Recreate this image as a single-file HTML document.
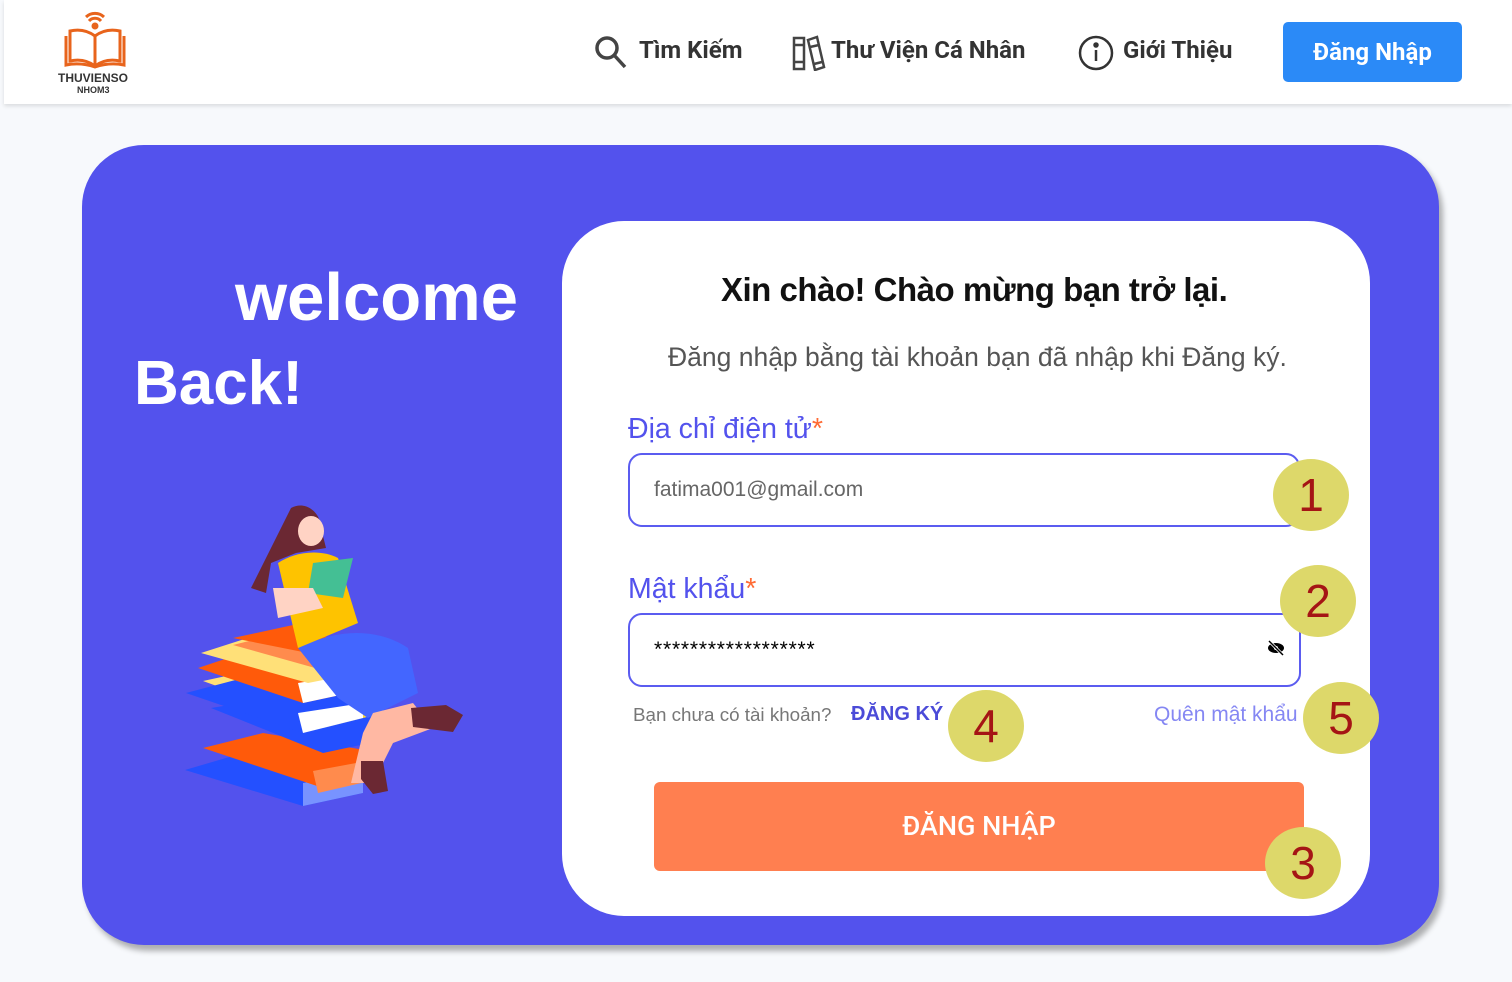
<!DOCTYPE html>
<html><head><meta charset="utf-8"><style>
*{margin:0;padding:0;box-sizing:border-box}
body{width:1512px;height:982px;overflow:hidden;background:#f7f9fc;font-family:"Roboto","Liberation Sans",sans-serif;position:relative}
.hdr{position:absolute;left:4px;top:0;width:1508px;height:104px;background:#fff;box-shadow:0 2px 4px rgba(0,0,0,.12)}
.nav{position:absolute;top:36px;font-size:24px;font-weight:700;color:#333;display:flex;align-items:center}
.btn{position:absolute;left:1283px;top:22px;width:179px;height:60px;background:#2b8af7;border-radius:5px;color:#fff;font-size:24px;font-weight:700;text-align:center;line-height:60px}
.card{position:absolute;left:82px;top:145px;width:1357px;height:800px;background:#5352ed;border-radius:62px;box-shadow:4px 6px 6px rgba(0,0,0,.3)}
.w{position:absolute;color:#fff;font-weight:900;font-size:62px;font-family:"Liberation Sans",sans-serif}
.form{position:absolute;left:562px;top:221px;width:808px;height:695px;background:#fff;border-radius:62px}
.t{position:absolute;font-family:"Liberation Sans",sans-serif;white-space:nowrap}
.inp{position:absolute;border:2px solid #5b5cf0;border-radius:14px;background:#fff}
.b{position:absolute;width:76px;height:72px;border-radius:50%;background:#ddd86a;color:#a51515;font-size:46px;text-align:center;line-height:72px;font-family:"Liberation Sans",sans-serif}
</style></head><body>
<div class="hdr"></div>
<svg style="position:absolute;left:60px;top:8px" width="70" height="62" viewBox="0 0 70 62" fill="none" stroke="#e8641c" stroke-width="3">
<path d="M26 9a13 13 0 0 1 18 0M29 13a8 8 0 0 1 12 0"/><circle cx="35" cy="18" r="2" fill="#e8641c"/>
<path d="M35 58V28c-8-6-16-7-25-5v30c9-2 17-1 25 5c8-6 16-7 25-5V23c-9-2-17-1-25 5"/>
<path d="M6 28v29c10-2 20-1 29 2c9-3 19-4 29-2V28"/>
</svg>
<div class="t" style="left:58px;top:71px;font-size:12px;font-weight:700;color:#333">THUVIENSO</div>
<div class="t" style="left:77px;top:85px;font-size:9px;font-weight:700;color:#333">NHOM3</div>

<svg style="position:absolute;left:594px;top:35px" width="34" height="34" viewBox="0 0 34 34" fill="none" stroke="#444" stroke-width="3.5"><circle cx="13" cy="13" r="10"/><path d="M20 20l11 12"/></svg>
<div class="nav" style="left:639px">Tìm Kiếm</div>
<svg style="position:absolute;left:792px;top:35px" width="34" height="36" viewBox="0 0 34 36" fill="none" stroke="#444" stroke-width="2.5"><rect x="2" y="3" width="10" height="31"/><path d="M2 10h10M2 27h10"/><path d="M16 5l9-3 7 30-9 3z"/><path d="M18 12l9-2M22 29l8-2"/></svg>
<div class="nav" style="left:831px">Thư Viện Cá Nhân</div>
<svg style="position:absolute;left:1078px;top:35px" width="36" height="36" viewBox="0 0 36 36" fill="none" stroke="#333" stroke-width="2.5"><circle cx="18" cy="18" r="16"/><path d="M18 15v11"/><circle cx="18" cy="10" r="1.5" fill="#333"/></svg>
<div class="nav" style="left:1123px">Giới Thiệu</div>
<div class="btn">Đăng Nhập</div>

<div class="card"></div>
<div class="w" style="left:235px;top:259px;font-size:67px">welcome</div>
<div class="w" style="left:134px;top:348px">Back!</div>

<svg style="position:absolute;left:183px;top:503px" width="295" height="307" viewBox="0 0 295 307">
<polygon points="2,267 120,303 180,290 180,270 60,250" fill="#2450ff"/>
<polygon points="120,280 180,270 180,290 120,303" fill="#7893ff"/>
<polygon points="20,245 140,285 200,270 200,250 80,230" fill="#ff5a0a"/>
<polygon points="130,268 200,255 200,275 135,290" fill="#ff8b4d"/>
<polygon points="28,205 140,250 210,235 210,215 90,195" fill="#2450ff"/>
<polygon points="20,178 135,220 200,205 200,185 80,165" fill="#ffe078"/>
<polygon points="135,205 200,190 200,210 140,225" fill="#ffd93a"/>
<polygon points="3,190 120,230 180,215 180,195 60,175" fill="#2450ff"/>
<polygon points="115,210 180,200 180,215 120,230" fill="#fff"/>
<polygon points="15,165 120,200 190,185 190,165 75,145" fill="#ff5a0a"/>
<polygon points="115,180 190,168 190,185 120,200" fill="#fff"/>
<polygon points="18,150 125,180 200,165 200,150 80,130" fill="#ffe078"/>
<polygon points="50,142 150,170 180,160 180,142 110,127" fill="#ff8b4d"/>
<polygon points="50,135 150,155 175,145 110,122" fill="#ff5a0a"/>
<path d="M115 145c40-20 80-20 110 0l10 45-50 25-30-20z" fill="#4366ff"/>
<path d="M190 210l40-10 20 25-40 15 -20 40h-22l12-50z" fill="#ffb8a3"/>
<path d="M228 205l35-3 17 10-10 17-40-5z" fill="#6b2833"/>
<path d="M178 258h22l5 30-15 3-12-15z" fill="#6b2833"/>
<path d="M95 60c15-10 40-15 60-5l20 65-60 25z" fill="#fec300"/>
<path d="M108 5c15-8 30 5 30 20l5 20-30 5-25 10-5 30-15-5 20-40z" fill="#6b2833"/>
<ellipse cx="128" cy="28" rx="13" ry="15" fill="#ffd3c4"/>
<polygon points="130,60 170,55 160,95 125,90" fill="#44bf94"/>
<path d="M90 85l40 0 10 20-45 10z" fill="#ffd3c4"/>
</svg>

<div class="form"></div>
<div class="t" style="left:721px;top:271px;font-size:33px;font-weight:700;color:#111;letter-spacing:-0.5px">Xin chào! Chào mừng bạn trở lại.</div>
<div class="t" style="left:668px;top:342px;font-size:26.5px;color:#555">Đăng nhập bằng tài khoản bạn đã nhập khi Đăng ký.</div>
<div class="t" style="left:628px;top:413px;font-size:28.5px;color:#5352ed">Địa chỉ điện tử<span style="color:#ff6b35">*</span></div>
<div class="inp" style="left:628px;top:453px;width:672px;height:74px"></div>
<div class="t" style="left:654px;top:478px;font-size:21px;color:#666">fatima001@gmail.com</div>
<div class="t" style="left:628px;top:573px;font-size:28.5px;color:#5352ed">Mật khẩu<span style="color:#ff6b35">*</span></div>
<div class="inp" style="left:628px;top:613px;width:673px;height:74px"></div>
<div class="t" style="left:654px;top:638px;font-size:21px;color:#000;letter-spacing:0.8px">******************</div>
<svg style="position:absolute;left:1267px;top:640px" width="18" height="16" viewBox="0 0 18 16"><ellipse cx="9" cy="8" rx="8" ry="5" fill="#000"/><circle cx="9" cy="8" r="2" fill="#fff"/><path d="M2 1l14 14" stroke="#fff" stroke-width="3"/><path d="M2 1l14 14" stroke="#000" stroke-width="1.5"/></svg>
<div class="t" style="left:633px;top:704px;font-size:18.8px;color:#777">Bạn chưa có tài khoản?</div>
<div class="t" style="left:851px;top:703px;font-size:20px;font-weight:700;color:#4b4bd8">ĐĂNG KÝ</div>
<div class="t" style="left:1154px;top:703px;font-size:21px;color:#8587f3">Quên mật khẩu</div>
<div style="position:absolute;left:654px;top:782px;width:650px;height:89px;background:#ff7f50;border-radius:6px;color:#fff;font-size:27px;text-align:center;line-height:89px;font-weight:500">ĐĂNG NHẬP</div>
<div class="b" style="left:1273px;top:459px">1</div>
<div class="b" style="left:1280px;top:565px">2</div>
<div class="b" style="left:1265px;top:827px">3</div>
<div class="b" style="left:948px;top:690px">4</div>
<div class="b" style="left:1303px;top:682px">5</div>
</body></html>
